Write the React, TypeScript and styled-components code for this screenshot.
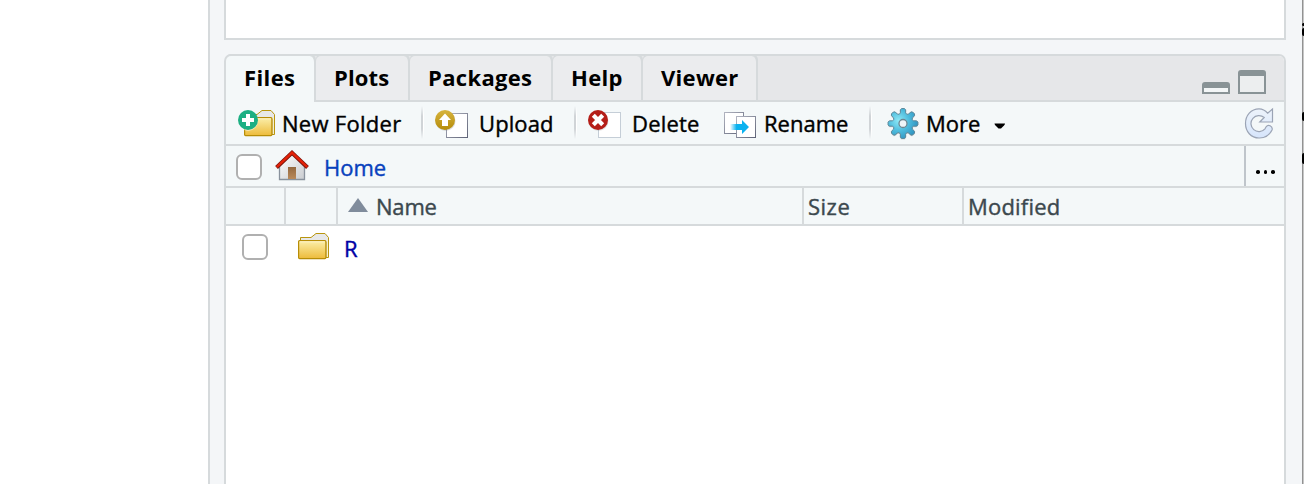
import React from 'react';
import styled, { createGlobalStyle } from 'styled-components';

const line = '#d6dadc';
const pane = '#f4f8f9';

const Global = createGlobalStyle`
  *{box-sizing:border-box}
  body{margin:0;background:#fff;font-family:"Open Sans","Noto Sans",sans-serif;font-size:22px;color:#000;overflow:hidden}
  svg{display:block;flex:none;overflow:visible}
`;
const Screen = styled.div`display:flex;width:1304px;height:484px;overflow:hidden;`;
const Editor = styled.div`width:208px;flex:none;background:#fff;`;
const Workspace = styled.main`
  width:1094px;flex:none;background:#f4f6f8;border-left:2px solid ${line};
  padding:0 16px 0 14px;display:flex;flex-direction:column;gap:14px;
`;
const UpperPane = styled.section`height:40px;flex:none;background:#fff;border:2px solid ${line};border-top:0;`;
const FilesPane = styled.section`
  flex:1;background:#fff;border:2px solid ${line};border-bottom:0;border-radius:7px 7px 0 0;
`;
const TabBar = styled.div`display:flex;height:46px;background:#e6e7e9;box-shadow:inset 0 -2px ${line};border-radius:5px 5px 0 0;`;
const Tab = styled.div<{ $w: number; $active?: boolean }>`
  width:${p => p.$w}px;height:46px;flex:none;padding:5px 0 0 18px;
  background:${p => (p.$active ? pane : '#ebecee')};
  border-right:2px solid ${line};
  border-bottom:${p => (p.$active ? '0' : `2px solid ${line}`)};
  border-radius:5px 6px 0 0;
  box-shadow:0 -2px 0 ${line};
`;
const WindowControls = styled.div`display:flex;align-items:flex-end;gap:8px;margin-left:auto;padding:0 18px 8px 0;`;
const Text = styled.span<{ $ls?: number; $color?: string; $bold?: boolean }>`
  display:block;white-space:nowrap;line-height:32px;
  font-size:22px;
  font-weight:${p => (p.$bold ? 700 : 400)};
  -webkit-text-stroke:${p => (p.$bold ? '0' : '0.4px')};
  color:${p => p.$color ?? '#000'};
  letter-spacing:${p => p.$ls ?? 0}px;
`;
const Toolbar = styled.div`display:flex;height:44px;background:${pane};border-bottom:2px solid ${line};padding:4px 11px 0 12px;`;
const Action = styled.div<{ $w: number; $gap: number }>`
  display:flex;width:${p => p.$w}px;flex:none;gap:${p => p.$gap}px;
  ${Text}{padding-top:1px}
`;
const Divider = styled.i`width:3px;height:33px;flex:none;background:linear-gradient(90deg,#d0d4d7 0 66%,#fff 66%);mask-image:linear-gradient(transparent,#000 30%,#000 70%,transparent);`;
const Spacer = styled.div`flex:1;`;
const PathRow = styled.div`display:flex;height:42px;background:${pane};border-bottom:2px solid ${line};padding-left:10px;`;
const Check = styled.span`width:26px;height:26px;flex:none;margin-top:8px;border:2px solid #b0b0b0;border-radius:6px;background:#fff;`;
const HomeLink = styled.div`display:flex;gap:15px;margin-left:13px;padding-top:4px;${Text}{padding-top:1px}`;
const Browse = styled.button`
  width:40px;margin-left:auto;border:0;border-left:2px solid #bfc5cb;background:none;
  display:flex;justify-content:center;align-items:center;gap:4px;padding:12px 0 0 1px;
`;
const Dot = styled.i`width:3.5px;height:3.5px;border-radius:50%;background:#000;`;
const Header = styled.div`display:flex;height:38px;background:${pane};border-bottom:2px solid ${line};`;
const Column = styled.div<{ $w?: number; $pad?: number }>`
  display:flex;align-items:flex-start;gap:8px;
  ${p => (p.$w ? `width:${p.$w}px;border-right:2px solid ${line};` : 'flex:1;')}
  padding:2px 0 0 ${p => p.$pad ?? 4}px;
`;
const FileRow = styled.div`display:flex;padding-left:16px;`;
const FileIcon = styled.div`margin:7px 0 0 30px;`;
const FileName = styled.div`margin:6px 0 0 15px;`;
const Edge = styled.aside`
  width:2px;flex:none;overflow:hidden;background:linear-gradient(90deg,#929292 50%,#c6c6c6 50%);
  display:flex;flex-direction:column;align-items:flex-end;padding-top:23px;
`;
const Sliver = styled.i<{ $h: number; $gap: number }>`width:2px;height:${p => p.$h}px;margin-bottom:${p => p.$gap}px;flex:none;background:#000;border-radius:2px 0 0 2px;`;

const FolderShape = () => (
  <>
    <path d="M2.5 8V4.5h10.5l5-4h9l3.5 4v20H28V9H2.5z" fill="#e7e8e9" stroke="#b8950f" />
    <path d="M29.2 7v16.8" fill="none" stroke="#fdf3c4" />
    <rect x=".6" y="7.6" width="27.3" height="18" rx="1" fill="url(#folder)" stroke="#b78d07" strokeWidth="1.2" />
    <path d="M1.8 8.8h25" stroke="#fff5cd" />
  </>
);
const Page = ({ x, y, w, h, stroke }: { x: number; y: number; w: number; h: number; stroke: string }) => (
  <rect x={x} y={y} width={w} height={h} fill="#fff" stroke={stroke} />
);
const gearPath = () => {
  let d = '';
  for (let i = 0; i < 8; i++) {
    const pt = (a: number, r: number) => {
      const t = ((i * 45 + a - 90) * Math.PI) / 180;
      return `${(15 + r * Math.cos(t)).toFixed(2)} ${(15.5 + r * Math.sin(t)).toFixed(2)}`;
    };
    d += `${i ? 'L' : 'M'}${pt(-14, 11)} Q${pt(-13, 15)} ${pt(-5, 15)} L${pt(5, 15)} Q${pt(13, 15)} ${pt(14, 11)} Q${pt(22.5, 9)} ${pt(31, 11)}`;
  }
  return d + 'Z';
};

export default function App() {
  return (
    <>
      <Global />
      <Screen>
        <Editor />
        <Workspace>
          <UpperPane />
          <FilesPane>
            <TabBar>
              <Tab $w={90} $active><Text $bold $ls={0.4}>Files</Text></Tab>
              <Tab $w={94}><Text $bold $ls={0.15}>Plots</Text></Tab>
              <Tab $w={143}><Text $bold $ls={0.33}>Packages</Text></Tab>
              <Tab $w={90}><Text $bold $ls={0.3}>Help</Text></Tab>
              <Tab $w={115}><Text $bold $ls={0.3}>Viewer</Text></Tab>
              <WindowControls>
                <svg width="28" height="12"><path d="M1 5v6h26V5" fill="#f3f6f7" stroke="#899396" strokeWidth="2" /><path d="M0 6V3q0-3 3-3h22q3 0 3 3v3z" fill="#899396" /></svg>
                <svg width="28" height="24"><path d="M1 5v18h26V5" fill="#eceeef" stroke="#899396" strokeWidth="2" /><path d="M0 6V3q0-3 3-3h22q3 0 3 3v3z" fill="#899396" /></svg>
              </WindowControls>
            </TabBar>
            <Toolbar>
              <Action $w={183} $gap={7}>
                <svg width="37" height="34">
                  <defs>
                    <linearGradient id="folder" x2="0" y2="1"><stop stopColor="#fbefab" /><stop offset="1" stopColor="#edbb3a" /></linearGradient>
                    <linearGradient id="gold" x2="0" y2="1"><stop stopColor="#d7b43e" /><stop offset="1" stopColor="#b58c0b" /></linearGradient>
                    <linearGradient id="page" x2="1" y2="1"><stop stopColor="#b2b5c1" /><stop offset="1" stopColor="#5f6478" /></linearGradient>
                    <linearGradient id="wall" x2="1" y2="1"><stop stopColor="#fff" /><stop offset="1" stopColor="#c9ccd0" /></linearGradient>
                    <linearGradient id="door" x2="0" y2="1"><stop stopColor="#94683f" /><stop offset="1" stopColor="#b98a5b" /></linearGradient>
                    <linearGradient id="arrow" x2="1"><stop stopColor="#0ab2f0" stopOpacity="0" /><stop offset=".35" stopColor="#0ab2f0" /></linearGradient>
                    <radialGradient id="gear" cx=".35" cy=".4" r=".65"><stop stopColor="#8ee8f6" /><stop offset=".55" stopColor="#4dbbdc" /><stop offset="1" stopColor="#3296c2" /></radialGradient>
                    <linearGradient id="refresh" x2="0" y2="1"><stop stopColor="#edf3fb" /><stop offset="1" stopColor="#d6e5fb" /></linearGradient>
                  </defs>
                  <g transform="translate(6 4)"><FolderShape /></g>
                  <circle cx="10" cy="15" r="10" fill="#fff" opacity=".5" /><circle cx="10" cy="14" r="10" fill="#1caf83" />
                  <path d="M10 8v12M4 14h12" stroke="#fff" strokeWidth="4" />
                </svg>
                <Text $ls={0.28}>New Folder</Text>
              </Action>
              <Divider />
              <Action $w={150} $gap={11}>
                <svg width="44" height="34">
                  <g transform="translate(11 0)">
                    <Page x={11.5} y={7.5} w={21} h={24} stroke="url(#page)" />
                    <circle cx="10.5" cy="15" r="10" fill="#777" opacity=".25" /><circle cx="10" cy="14" r="10" fill="url(#gold)" />
                    <path d="M10 7.5l6 6.5h-3v6H7v-6H4z" fill="#fff" />
                  </g>
                </svg>
                <Text $ls={0.1}>Upload</Text>
              </Action>
              <Divider />
              <Action $w={147} $gap={11}>
                <svg width="44" height="34">
                  <g transform="translate(11 0)">
                    <Page x={10.5} y={6.5} w={22} h={25} stroke="#c5ced7" />
                    <circle cx="10.5" cy="15" r="10" fill="#777" opacity=".2" /><circle cx="10" cy="14" r="10" fill="#b51e18" />
                    <path d="M5.3 9.3l9.4 9.4m0-9.4l-9.4 9.4" stroke="#fff" strokeWidth="4.2" />
                  </g>
                </svg>
                <Text $ls={0.2}>Delete</Text>
              </Action>
              <Action $w={145} $gap={8}>
                <svg width="32" height="34">
                  <Page x={.5} y={6.5} w={19} h={21} stroke="url(#page)" />
                  <Page x={12.5} y={10.5} w={19} h={21} stroke="url(#page)" />
                  <path d="M6 18h12v-4l7 7-7 7v-4H6z" fill="url(#arrow)" />
                </svg>
                <Text>Rename</Text>
              </Action>
              <Divider />
              <Action $w={134} $gap={8}>
                <svg width="46" height="34"><g transform="translate(16 2)"><path d={gearPath()} transform="translate(0 1)" fill="#888" opacity=".3" /><path d={gearPath()} fill="url(#gear)" stroke="#5d8799" /><circle cx="15" cy="15.5" r="4" fill="#eef5f8" stroke="#6d8691" strokeWidth="1.3" /></g></svg>
                <Text>More</Text>
                <svg width="11" height="34"><path d="M6.5 17.5h10.5q0 1-1 2l-3 3h-2.5l-3-3q-1-1-1-2z" /></svg>
              </Action>
              <Spacer />
              <svg width="28" height="34"><path transform="translate(0 2)" d="M22.6 5.2L27.5 1v13H14.8l4.4-4.5A8 8 0 1 0 20 20.8q2-4.5 5-3 3 1.5 2 4.2A14 14 0 0 1 14 30C6 30 .5 23.5.5 15.5S6 .8 14 .8q5 0 8.6 4.4z" fill="url(#refresh)" stroke="#9ba4b5" strokeWidth="1.2" /></svg>
            </Toolbar>
            <PathRow>
              <Check />
              <HomeLink>
                <svg width="34" height="31">
                  <path d="M4.5 15.5L17 4l12.5 11.5v14h-25z" fill="url(#wall)" stroke="#89929d" strokeWidth="1.3" />
                  <rect x="13" y="17" width="8" height="12" fill="url(#door)" />
                  <path d="M1.5 17.5L17 2.8l15.5 14.7" fill="none" stroke="#7f160d" strokeWidth="4" />
                  <path d="M1.8 17L17 2.7 32.2 17" fill="none" stroke="#e52208" strokeWidth="2.4" />
                </svg>
                <Text $color="#0841bd">Home</Text>
              </HomeLink>
              <Browse><Dot /><Dot /><Dot /></Browse>
            </PathRow>
            <Header>
              <Column $w={60} /><Column $w={52} />
              <Column $w={466} $pad={10}><svg width="20" height="30"><path d="M10 8l10 14H0z" fill="#808c9c" /></svg><Text $color="#3c484e" $ls={-0.2}>Name</Text></Column>
              <Column $w={160}><Text $color="#3c484e" $ls={0.5}>Size</Text></Column>
              <Column $pad={4}><Text $color="#3c484e" $ls={0.2}>Modified</Text></Column>
            </Header>
            <FileRow>
              <Check />
              <FileIcon><svg width="31" height="27"><FolderShape /></svg></FileIcon>
              <FileName><Text $color="#0000a5">R</Text></FileName>
            </FileRow>
          </FilesPane>
        </Workspace>
        <Edge><Sliver $h={3} $gap={2} /><Sliver $h={8} $gap={76} /><Sliver $h={9} $gap={32} /><Sliver $h={11} $gap={0} /></Edge>
      </Screen>
    </>
  );
}
